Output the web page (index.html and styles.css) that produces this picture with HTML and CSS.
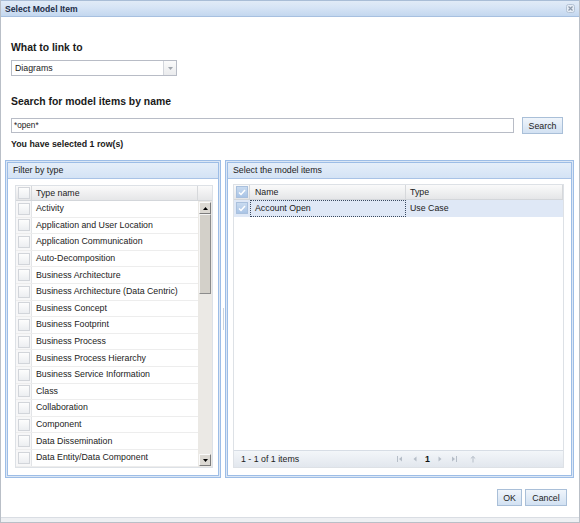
FILE: index.html
```html
<!DOCTYPE html>
<html>
<head>
<meta charset="utf-8">
<title>Select Model Item</title>
<link rel="stylesheet" href="styles.css">
</head>
<body>
<div class="window">
  <div class="titlebar">
    <span class="title">Select Model Item</span>
    <span class="close">
      <svg width="9" height="9" viewBox="0 0 9 9"><rect x="0.5" y="0.5" width="8" height="8" rx="2" fill="#e6edf6" stroke="#b3c2d4"/><path d="M2.5 2.5 L6.5 6.5 M6.5 2.5 L2.5 6.5" stroke="#8d9aab" stroke-width="1.2"/></svg>
    </span>
  </div>

  <div class="top">
    <div class="label">What to link to</div>
    <div class="select">
      <span class="select-text">Diagrams</span>
      <span class="trigger"><svg width="5" height="3" viewBox="0 0 5 3"><path d="M0 0 H5 L2.5 3 Z" fill="#a0a6ae"/></svg></span>
    </div>
    <div class="label search-label">Search for model items by name</div>
    <div class="search-row">
      <div class="input">*open*</div>
      <button class="btn btn-search">Search</button>
    </div>
    <div class="status">You have selected 1 row(s)</div>
  </div>

  <div class="panels">
    <div class="panel left">
      <div class="panel-inner">
        <div class="panel-header">Filter by type</div>
        <div class="panel-body">
          <div class="grid">
            <div class="grid-head">
              <div class="cb-cell"><span class="cb"></span></div>
              <div class="hcell hcell-fill">Type name</div>
              <div class="hcell hcell-scroll"></div>
            </div>
            <div class="grid-main">
              <div class="rows">
                <div class="row"><div class="cb-cell"><span class="cb"></span></div><div class="cell">Activity</div></div>
                <div class="row"><div class="cb-cell"><span class="cb"></span></div><div class="cell">Application and User Location</div></div>
                <div class="row"><div class="cb-cell"><span class="cb"></span></div><div class="cell">Application Communication</div></div>
                <div class="row"><div class="cb-cell"><span class="cb"></span></div><div class="cell">Auto-Decomposition</div></div>
                <div class="row"><div class="cb-cell"><span class="cb"></span></div><div class="cell">Business Architecture</div></div>
                <div class="row"><div class="cb-cell"><span class="cb"></span></div><div class="cell">Business Architecture (Data Centric)</div></div>
                <div class="row"><div class="cb-cell"><span class="cb"></span></div><div class="cell">Business Concept</div></div>
                <div class="row"><div class="cb-cell"><span class="cb"></span></div><div class="cell">Business Footprint</div></div>
                <div class="row"><div class="cb-cell"><span class="cb"></span></div><div class="cell">Business Process</div></div>
                <div class="row"><div class="cb-cell"><span class="cb"></span></div><div class="cell">Business Process Hierarchy</div></div>
                <div class="row"><div class="cb-cell"><span class="cb"></span></div><div class="cell">Business Service Information</div></div>
                <div class="row"><div class="cb-cell"><span class="cb"></span></div><div class="cell">Class</div></div>
                <div class="row"><div class="cb-cell"><span class="cb"></span></div><div class="cell">Collaboration</div></div>
                <div class="row"><div class="cb-cell"><span class="cb"></span></div><div class="cell">Component</div></div>
                <div class="row"><div class="cb-cell"><span class="cb"></span></div><div class="cell">Data Dissemination</div></div>
                <div class="row"><div class="cb-cell"><span class="cb"></span></div><div class="cell">Data Entity/Data Component</div></div>
                <div class="row"><div class="cb-cell"><span class="cb"></span></div><div class="cell"></div></div>
              </div>
              <div class="scrollbar">
                <div class="sb-btn"><svg width="5" height="3" viewBox="0 0 5 3"><path d="M0 3 H5 L2.5 0 Z" fill="#000"/></svg></div>
                <div class="sb-thumb"></div>
                <div class="sb-track"></div>
                <div class="sb-btn"><svg width="5" height="3" viewBox="0 0 5 3"><path d="M0 0 H5 L2.5 3 Z" fill="#000"/></svg></div>
              </div>
            </div>
          </div>
        </div>
      </div>
    </div>

    <div class="splitter"><span class="grip"></span></div>

    <div class="panel right">
      <div class="panel-inner">
        <div class="panel-header">Select the model items</div>
        <div class="panel-body">
          <div class="grid">
            <div class="grid-head">
              <div class="cb-cell"><span class="cb checked"><svg width="8" height="7" viewBox="0 0 8 7"><path d="M1 3.5 L3 5.5 L7 1" fill="none" stroke="#fff" stroke-width="1.5"/></svg></span></div>
              <div class="hcell hcell-name">Name</div>
              <div class="hcell hcell-fill">Type</div>
            </div>
            <div class="grid-main right-main">
              <div class="row selected">
                <div class="cb-cell"><span class="cb checked"><svg width="8" height="7" viewBox="0 0 8 7"><path d="M1 3.5 L3 5.5 L7 1" fill="none" stroke="#fff" stroke-width="1.5"/></svg></span></div>
                <div class="cell cell-name focus">Account Open</div>
                <div class="cell">Use Case</div>
              </div>
            </div>
            <div class="paging">
              <span class="paging-info">1 - 1 of 1 items</span>
              <span class="pg pg-first"><svg width="6" height="6" viewBox="0 0 6 6"><path d="M0.5 0 V6" stroke="#b6bec8"/><path d="M5 0.5 L2 3 L5 5.5 Z" fill="#b6bec8"/></svg></span>
              <span class="pg pg-prev"><svg width="4" height="6" viewBox="0 0 4 6"><path d="M3.5 0.5 L0.5 3 L3.5 5.5 Z" fill="#b6bec8"/></svg></span>
              <span class="pg-num">1</span>
              <span class="pg pg-next"><svg width="4" height="6" viewBox="0 0 4 6"><path d="M0.5 0.5 L3.5 3 L0.5 5.5 Z" fill="#b6bec8"/></svg></span>
              <span class="pg pg-last"><svg width="6" height="6" viewBox="0 0 6 6"><path d="M1 0.5 L4 3 L1 5.5 Z" fill="#b6bec8"/><path d="M5.5 0 V6" stroke="#b6bec8"/></svg></span>
              <span class="pg pg-refresh"><svg width="6" height="7" viewBox="0 0 6 7"><path d="M3 0.5 V6.5 M0.8 2.5 L3 0.5 L5.2 2.5" fill="none" stroke="#b6bec8" stroke-width="1"/></svg></span>
            </div>
          </div>
        </div>
      </div>
    </div>
  </div>

  <div class="footer">
    <button class="btn btn-ok">OK</button>
    <button class="btn btn-cancel">Cancel</button>
  </div>

  <div class="bottom-strip"></div>
</div>
</body>
</html>
```

FILE: styles.css
```css
* {
  box-sizing: border-box;
}

body {
  margin: 0;
  font-family: "Liberation Sans", Arial, sans-serif;
  font-size: 8.8px;
  color: #222;
  background: #fff;
}

.window {
  width: 580px;
  height: 523px;
  display: flex;
  flex-direction: column;
  border-left: 1px solid #b9bfc7;
  border-right: 1px solid #b9bfc7;
  background: #fff;
  overflow: hidden;
}

.titlebar {
  height: 17px;
  flex: none;
  display: flex;
  align-items: center;
  padding-left: 4px;
  border-top: 1px solid #a9bdd6;
  border-bottom: 1px solid #a7c0e0;
  background: linear-gradient(#e1ebf7 0%, #d6e4f5 45%, #c3d7ef 100%);
}

.title {
  font-weight: bold;
  font-size: 8.6px;
  color: #1c2e48;
}

.close {
  margin-left: auto;
  margin-right: 4px;
  display: flex;
}

.top {
  padding-left: 10px;
  flex: none;
}

.label {
  margin-top: 24px;
  font-size: 10.4px;
  font-weight: bold;
  line-height: 13px;
  color: #1a1a1a;
}

.select {
  margin-top: 6px;
  width: 166px;
  height: 16px;
  display: flex;
  border: 1px solid #b8bcc6;
}

.select-text {
  flex: 1;
  padding-left: 3px;
  line-height: 14px;
}

.trigger {
  width: 13px;
  display: flex;
  align-items: center;
  justify-content: center;
  border-left: 1px solid #d3d6dc;
  background: linear-gradient(#fbfbfb, #eaebed);
}

.search-label {
  margin-top: 19px;
}

.search-row {
  margin-top: 9px;
  height: 17px;
  display: flex;
  align-items: center;
  gap: 8px;
}

.input {
  width: 503px;
  height: 15px;
  border: 1px solid #b8bcc6;
  padding-left: 2px;
  font-size: 8.2px;
  line-height: 13px;
}

.btn {
  height: 17px;
  padding: 0;
  border: 1px solid #a9bfd8;
  background: linear-gradient(#f0f5fb, #d2e1f2);
  font-family: "Liberation Sans", Arial, sans-serif;
  font-size: 8.8px;
  color: #222;
}

.btn-search {
  width: 41px;
}

.status {
  margin-top: 5px;
  font-weight: bold;
  line-height: 11px;
  color: #1a1a1a;
}

.panels {
  flex: none;
  margin-top: 10px;
  padding-left: 4px;
  height: 318px;
  display: flex;
}

.panel {
  display: flex;
  border: 1px solid #9dbde6;
  padding: 1px;
  background: #dce7f5;
}

.panel.left {
  width: 216px;
}

.panel.right {
  width: 349px;
}

.splitter {
  width: 4px;
  display: flex;
  align-items: center;
  justify-content: center;
}

.grip {
  width: 1px;
  height: 22px;
  background: #c9d2dd;
}

.panel-inner {
  flex: 1;
  display: flex;
  flex-direction: column;
  border: 1px solid #9dbde6;
  background: #fff;
  min-width: 0;
}

.panel-header {
  height: 16px;
  flex: none;
  padding-left: 5px;
  line-height: 15px;
  border-bottom: 1px solid #a9c3e6;
  background: linear-gradient(#e5eef9, #d4e3f5);
  color: #222;
}

.panel-body {
  flex: 1;
  min-height: 0;
  display: flex;
  padding: 6px 5px 7px 7px;
}

.right .panel-body {
  padding: 5px 7px 7px 5px;
}

.grid {
  flex: 1;
  min-width: 0;
  display: flex;
  flex-direction: column;
  border: 1px solid #dde1e6;
  overflow: hidden;
}

.grid-head {
  height: 15px;
  flex: none;
  display: flex;
  border-bottom: 1px solid #d3d6da;
  background: linear-gradient(#fafafa, #e5e6e8);
}

.cb-cell {
  width: 16px;
  flex: none;
  display: flex;
  align-items: center;
  justify-content: center;
  border-right: 1px solid #e2e4e7;
  background: #f7f7f8;
}

.grid-head .cb-cell {
  border-right: 1px solid #d6d8db;
  background: transparent;
}

.cb {
  width: 12px;
  height: 12px;
  border: 1px solid #d2d5da;
  background: linear-gradient(#fdfdfd, #eceef1);
  display: flex;
  align-items: center;
  justify-content: center;
}

.cb.checked {
  border-color: #a9c0dd;
  background: linear-gradient(#c9dbf0, #a9c4e6);
}

.hcell {
  padding-left: 4px;
  line-height: 14px;
  border-right: 1px solid #d6d8db;
}

.hcell-fill {
  flex: 1;
}

.hcell-scroll {
  width: 14px;
  padding: 0;
  border-right: none;
}

.hcell-name {
  width: 156px;
  flex: none;
  padding-left: 5px;
}

.grid-main {
  flex: 1;
  min-height: 0;
  display: flex;
}

.rows {
  flex: 1;
  min-width: 0;
  overflow: hidden;
}

.row {
  height: 16.6px;
  display: flex;
  align-items: center;
  border-bottom: 1px solid #ededed;
}

.row .cb-cell {
  align-self: stretch;
}

.cell {
  padding-left: 4px;
  white-space: nowrap;
  line-height: 15px;
}

.scrollbar {
  width: 14px;
  flex: none;
  display: flex;
  flex-direction: column;
  align-items: center;
  background: #ebe9e5;
  padding: 1px 0;
}

.sb-btn {
  width: 12px;
  height: 12px;
  flex: none;
  display: flex;
  align-items: center;
  justify-content: center;
  background: #dcd9d3;
  border: 1px solid;
  border-color: #fafafa #7d7d7d #7d7d7d #fafafa;
}

.sb-thumb {
  width: 12px;
  height: 80px;
  flex: none;
  background: #d3d0c9;
  border: 1px solid;
  border-color: #f5f5f5 #8c8c8c #8c8c8c #f5f5f5;
}

.sb-track {
  flex: 1;
}

.right-main {
  flex-direction: column;
}

.row.selected {
  background: #dfe8f6;
  border-bottom: none;
}

.row.selected .cb-cell {
  border-right: none;
  background: transparent;
}

.cell-name {
  width: 156px;
  flex: none;
  align-self: stretch;
  padding-left: 4px;
}

.focus {
  border: 1px dotted #3a4a60;
}

.paging {
  height: 17px;
  flex: none;
  display: flex;
  align-items: center;
  border-top: 1px solid #d7dde5;
  background: linear-gradient(#f3f6f9, #e2e7ee);
}

.paging-info {
  width: 163px;
  flex: none;
  padding-left: 7px;
  color: #222;
}

.pg {
  display: flex;
  align-items: center;
}

.pg-prev {
  margin-left: 10px;
}

.pg-num {
  margin-left: 8px;
  font-weight: bold;
  color: #111;
}

.pg-next {
  margin-left: 8px;
}

.pg-last {
  margin-left: 9px;
}

.pg-refresh {
  margin-left: 13px;
}

.footer {
  flex: none;
  margin-top: 11px;
  padding-right: 12px;
  display: flex;
  justify-content: flex-end;
  gap: 3px;
}

.btn-ok {
  width: 25px;
}

.btn-cancel {
  width: 42px;
}

.bottom-strip {
  margin-top: auto;
  height: 6px;
  flex: none;
  border-top: 1px solid #d9dde3;
  border-bottom: 1px solid #b9bfc7;
  background: #eef0f3;
}
```
